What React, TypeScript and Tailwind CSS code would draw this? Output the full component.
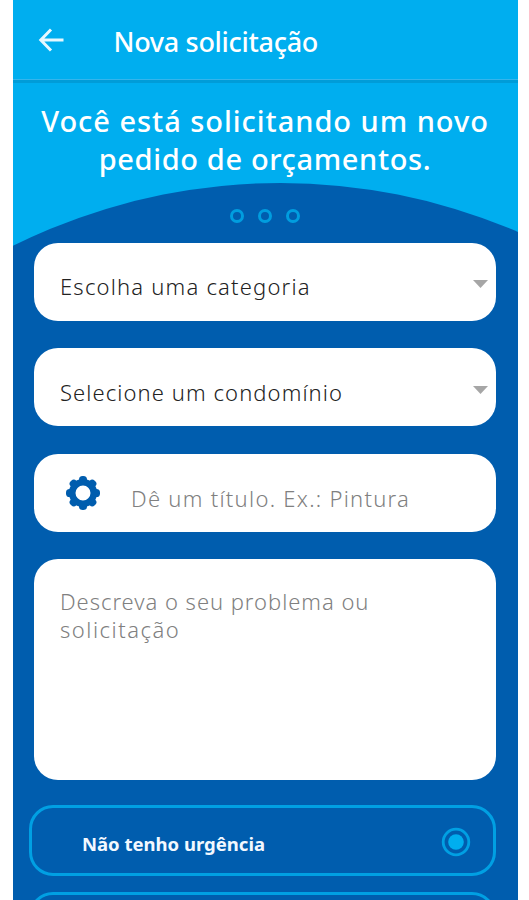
import { twMerge } from "tailwind-merge";

const selects = [
  { label: "Escolha uma categoria", tracking: "tracking-[1.2px]" },
  { label: "Selecione um condomínio", tracking: "tracking-[1.08px]" },
];

function BackIcon() {
  return (
    <svg viewBox="0 0 26 24" className="mt-[2px] h-[24px] w-[26px]" fill="none" stroke="#e6f8ff" strokeWidth="3">
      <path d="M13 1.500L2.800 12L13 22.500M3 12H25.500" />
    </svg>
  );
}

function GearIcon() {
  const teeth = [0, 45, 90, 135, 180, 225, 270, 315];

  return (
    <svg viewBox="-17 -17 34 34" className="size-[34px]" fill="#005dae">
      {teeth.map((angle) => (
        <rect key={angle} x="-4" y="-17" width="8" height="9" rx="3.6" transform={`rotate(${angle})`} />
      ))}
      <circle r="10.8" fill="none" stroke="#005dae" strokeWidth="6.6" />
    </svg>
  );
}

function Field({ className, children }: { className?: string; children: React.ReactNode }) {
  return (
    <div className={twMerge("flex h-[78px] shrink-0 rounded-[24px] bg-white pl-[26px]", className)}>
      {children}
    </div>
  );
}

export default function App() {
  return (
    <div className="h-[900px] w-[529px] overflow-hidden bg-white pl-[12.5px] font-['Noto_Sans',sans-serif]">
      <main className="flex h-full w-[505px] flex-col overflow-hidden bg-[#005dae]">
        <header className="flex h-[79.5px] shrink-0 items-center border-b border-[#35b5ec] bg-[#00aeef] pl-[25px] text-white">
          <BackIcon />
          <h1 className="pt-[5px] pl-[50px] text-[27px] leading-none font-medium tracking-[-0.3px] whitespace-nowrap">
            Nova solicitação
          </h1>
        </header>

        {/* Intro with the curved edge */}
        <section className="grid h-[163px] shrink-0 grid-rows-[163px]">
          <svg viewBox="0 0 505 168" className="col-start-1 row-start-1 h-[168px] w-[505px]">
            <rect width="505" height="168" fill="#00aeef" />
            <rect width="505" height="3" fill="#009cd8" />
            <circle cx="267.5" cy="704" r="601" fill="#005dae" />
          </svg>
          <div className="col-start-1 row-start-1 flex flex-col items-center">
            <h2 className="pt-[22.5px] text-center text-[29px] leading-[38px] font-medium whitespace-nowrap text-white">
              <span className="tracking-[0.97px]">Você está solicitando um novo</span>
              <br />
              <span className="tracking-[0.64px]">pedido de orçamentos.</span>
            </h2>
            <div className="mt-[31px] flex gap-[14px]">
              <span className="size-[14px] rounded-full border-[3px] border-[#009ddf]" />
              <span className="size-[14px] rounded-full border-[3px] border-[#009ddf]" />
              <span className="size-[14px] rounded-full border-[3px] border-[#009ddf]" />
            </div>
          </div>
        </section>

        <form className="flex flex-col gap-[27.6px] pr-[22px] pl-[21.5px]">
          {selects.map(({ label, tracking }) => (
            <Field key={label} className="items-center justify-between pr-2">
              <span className={twMerge("pt-[9.5px] text-[22px] leading-none font-light text-[#222]", tracking)}>
                {label}
              </span>
              <svg viewBox="0 0 15 8" className="mt-[5px] h-[8px] w-[15px]" fill="#a6a6a6">
                <path d="M0 0h15L7.500 8z" />
              </svg>
            </Field>
          ))}
          <Field className="items-center pl-[32px]">
            <GearIcon />
            <span className="pt-[11px] pl-[31px] text-[22px] leading-none font-light tracking-[1.28px] text-[#808080]">
              Dê um título. Ex.: Pintura
            </span>
          </Field>
          <Field className="h-[221px] pt-[28px]">
            <p className="text-[22px] leading-[28px] font-light text-[#808080]">
              <span className="tracking-[0.96px]">Descreva o seu problema ou</span>
              <br />
              <span className="tracking-[1.5px]">solicitação</span>
            </p>
          </Field>
        </form>

        {/* Urgency options */}
        <div className="flex flex-col gap-4 pt-[25px] pr-[22px] pl-[16px]">
          <div className="flex h-[71px] shrink-0 items-center justify-between rounded-[24px] border-[3px] border-[#00a0e3] pr-[22px] pl-[50.5px]">
            <span className="pt-[7px] text-[18.5px] leading-none font-bold text-[#f2f8ff]">Não tenho urgência</span>
            <svg viewBox="0 0 30 30" className="mt-[2px] size-[30px]">
              <circle cx="15" cy="15" r="12.8" fill="none" stroke="#00a0e3" strokeWidth="2.8" />
              <circle cx="15" cy="15" r="7.8" fill="#00aeef" />
            </svg>
          </div>
          <div className="h-[71px] shrink-0 rounded-[24px] border-[3px] border-[#00a0e3]" />
        </div>
      </main>
    </div>
  );
}
